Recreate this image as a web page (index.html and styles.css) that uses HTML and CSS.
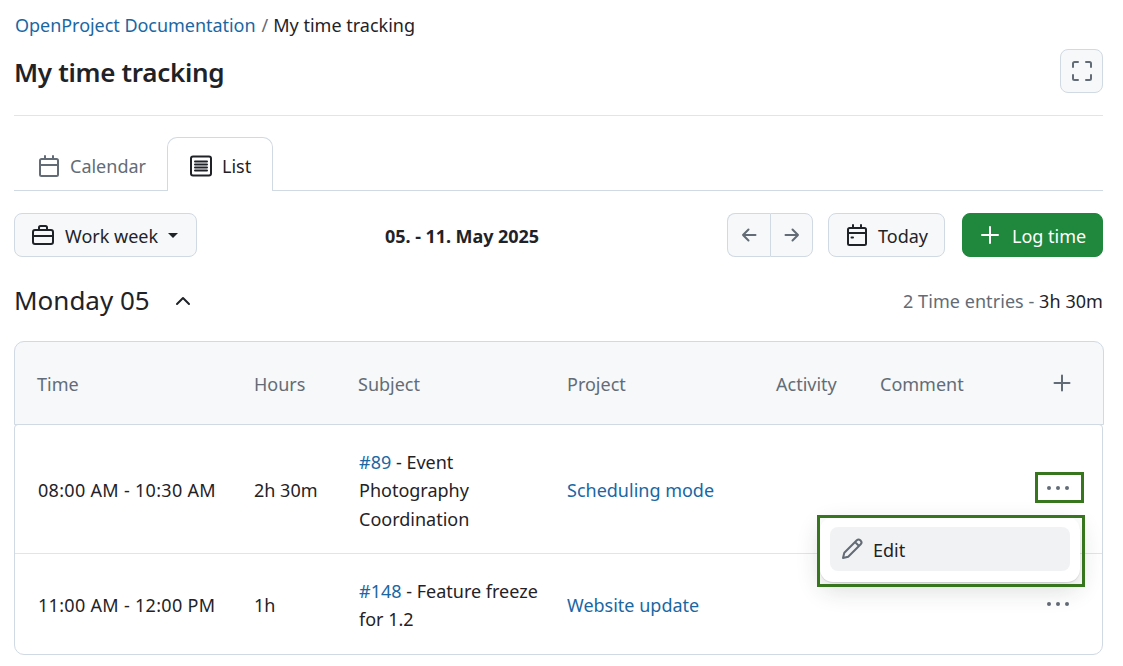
FILE: index.html
```html
<!DOCTYPE html>
<html lang="en">
<head>
<meta charset="utf-8">
<title>My time tracking</title>
<link rel="stylesheet" href="styles.css">
</head>
<body>
<main class="page">
  <nav class="crumbs"><a class="link" href="#">OpenProject Documentation</a><span class="sep">/</span><span>My time tracking</span></nav>
  <header class="title-row">
    <h1>My time tracking</h1>
    <button class="btn icon-btn" aria-label="Fullscreen">
      <svg class="ico muted" viewBox="0 0 24 24"><path d="M3 8V4.500A1.500 1.500 0 0 1 4.500 3H8M16 3h3.500A1.500 1.500 0 0 1 21 4.500V8M21 16v3.500a1.500 1.500 0 0 1-1.500 1.500H16M8 21H4.500A1.500 1.500 0 0 1 3 19.500V16"/></svg>
    </button>
  </header>
  <div class="tabs">
    <a class="tab" href="#">
      <svg class="ico muted" viewBox="0 0 24 24"><path d="M4.500 5h15A1.500 1.500 0 0 1 21 6.500v14a1.500 1.500 0 0 1-1.500 1.500h-15A1.500 1.500 0 0 1 3 20.500v-14A1.500 1.500 0 0 1 4.500 5zM3 11h18M8 2v3M16 2v3"/></svg>
      <span>Calendar</span></a>
    <a class="tab active" href="#">
      <svg class="ico" viewBox="0 0 24 24"><rect x="2" y="2.500" width="20" height="19" rx="2"/><path d="M6 7.500h12M6 10.500h12M6 13.500h12M6 16.500h12"/></svg>
      <span>List</span></a>
  </div>
  <div class="toolbar">
    <button class="btn week">
      <svg class="ico" viewBox="0 0 24 24"><rect x="2" y="7" width="20" height="14" rx="2"/><path d="M2 13h20M8 7V4.500A1.500 1.500 0 0 1 9.500 3h5A1.500 1.500 0 0 1 16 4.500V7"/></svg>
      <span class="lbl">Work week</span><span class="caret"></span>
    </button>
    <strong class="range">05. - 11. May 2025</strong>
    <div class="actions">
      <div class="group">
        <button class="btn seg" aria-label="Previous"><svg class="ico-s muted" viewBox="0 0 16 16"><path d="M14.500 8H2M7.500 2.500 2 8l5.500 5.500"/></svg></button>
        <button class="btn seg" aria-label="Next"><svg class="ico-s muted" viewBox="0 0 16 16"><path d="M1.500 8H14M8.500 2.500 14 8l-5.500 5.500"/></svg></button>
      </div>
      <button class="btn today">
        <svg class="ico" viewBox="0 0 24 24"><path d="M4.500 5h15A1.500 1.500 0 0 1 21 6.500v14a1.500 1.500 0 0 1-1.500 1.500h-15A1.500 1.500 0 0 1 3 20.500v-14A1.500 1.500 0 0 1 4.500 5zM3 10h18M8 2v3M16 2v3M6.500 14.500h1.500"/></svg>
        <span class="lbl">Today</span></button>
      <button class="btn primary">
        <svg class="ico" viewBox="0 0 24 24"><path d="M12 4v16M4 12h16"/></svg>
        <span class="lbl">Log time</span></button>
    </div>
  </div>
  <div class="day">
    <h2>Monday 05</h2>
    <svg class="chev" viewBox="0 0 16 16"><path d="M2 11 8 5l6 6"/></svg>
    <p class="summary">2 Time entries - <span class="total">3h 30m</span></p>
  </div>
  <section class="table">
    <div class="row head">
      <div>Time</div><div>Hours</div><div>Subject</div><div>Project</div><div>Activity</div><div>Comment</div>
      <svg class="ico plus muted" viewBox="0 0 24 24"><path d="M12 4.500v15M4.500 12h15"/></svg>
    </div>
    <div class="body">
      <div class="row entry first">
        <div class="time">08:00 AM - 10:30 AM</div><div>2h 30m</div>
        <div class="subject"><a class="link" href="#">#89</a> <span>- Event</span> <span>Photography</span> <span>Coordination</span></div>
        <div><a class="link" href="#">Scheduling mode</a></div><div></div><div></div>
        <span class="dots" aria-label="More"><i></i><i></i><i></i></span>
      </div>
      <div class="row entry">
        <div class="time">11:00 AM - 12:00 PM</div><div>1h</div>
        <div class="subject"><a class="link" href="#">#148</a> <span>- Feature freeze</span> <span>for 1.2</span></div>
        <div><a class="link" href="#">Website update</a></div><div></div><div></div>
        <span class="dots" aria-label="More"><i></i><i></i><i></i></span>
      </div>
    </div>
    <div class="menu">
      <div class="menu-item">
        <svg class="ico muted" viewBox="0 0 24 24"><path d="M3 21l1.300-5.200L16.800 3.300a2.500 2.500 0 0 1 3.500 0l.4.400a2.500 2.500 0 0 1 0 3.500L8.200 19.700zM15 5l4 4"/></svg>
        <span class="lbl">Edit</span></div>
    </div>
    <span class="mark mark-dots"></span>
    <span class="mark mark-menu"></span>
  </section>
</main>
</body>
</html>
```

FILE: styles.css
```css
* { box-sizing: border-box; }
html, body { margin: 0; height: 100%; overflow: hidden; }
body {
  background: #fff;
  color: #1f2328;
  font-family: "Noto Sans", sans-serif;
  font-size: 18px;
  line-height: 28px;
}
.page { padding: 11px 20px 0 14px; width: 1123px; }
.link { color: #1a67a3; text-decoration: none; }
.ico, .ico-s, .chev {
  fill: none;
  stroke: currentColor;
  stroke-width: 2;
  stroke-linecap: round;
  stroke-linejoin: round;
  flex: none;
}
.ico { width: 24px; height: 24px; }
.ico-s { width: 16px; height: 16px; }
.muted { color: #636c76; }
.lbl { padding-top: 2px; }

.crumbs { display: flex; padding-left: 1px; height: 28px; }
.crumbs .link { letter-spacing: -.04px; }
.sep { margin: 0 5px 0 6px; color: #636c76; }

.title-row {
  display: flex;
  justify-content: space-between;
  align-items: flex-start;
  height: 66px;
  margin-top: 11px;
  border-bottom: 1px solid #e1e5ea;
}
h1 { margin: 0; font-size: 26px; line-height: 44px; font-weight: 600; letter-spacing: -.3px; }
.btn {
  display: flex;
  align-items: center;
  font: inherit;
  color: inherit;
  background: #f6f8fa;
  border: 1px solid #d1d9e3;
  border-radius: 8px;
  height: 44px;
  padding: 0;
}
.icon-btn { width: 43px; justify-content: center; margin-top: -1px; }

.tabs {
  display: flex;
  height: 54px;
  margin-top: 21px;
  padding-left: 1px;
  border-bottom: 1px solid #d1d9e3;
}
.tab {
  display: flex;
  align-items: center;
  gap: 9px;
  height: 54px;
  color: #636c76;
  text-decoration: none;
  padding: 2px 21px 0;
  border: 1px solid transparent;
  border-bottom: 0;
  border-radius: 10px 10px 0 0;
}
.tab:first-child { padding-right: 20px; }
.tab.active { color: #1f2328; background: #fff; border-color: #d1d9e3; }

.toolbar { display: flex; align-items: center; margin-top: 22px; height: 44px; }
.week { width: 183px; padding-left: 16px; gap: 10px; }
.caret {
  border: 5.500px solid transparent;
  border-top-color: #1f2328;
  border-bottom: 0;
}
.range { margin-left: 188px; padding-top: 2px; font-weight: 700; letter-spacing: -.05px; }
.actions { display: flex; margin-left: auto; }
.group { display: flex; margin-right: 15px; }
.seg { width: 43px; justify-content: center; border-radius: 0 8px 8px 0; }
.seg:first-child { border-radius: 8px 0 0 8px; border-right: 0; }
.today { width: 117px; padding-left: 16px; gap: 9px; margin-right: 17px; }
.primary {
  width: 141px;
  padding-left: 15px;
  gap: 10px;
  background: #1f883d;
  border-color: #1f883d;
  color: #fff;
}

.day { display: flex; align-items: center; height: 44px; margin-top: 22px; }
h2 { margin: 0; padding-bottom: 2px; font-size: 26px; line-height: 42px; font-weight: 400; }
.chev { width: 16px; height: 16px; margin-left: 25px; }
.summary { margin: 0 0 0 auto; color: #636c76; letter-spacing: .06px; }
.total { color: #1f2328; }

.table { position: relative; margin-top: 18px; }
.row {
  display: grid;
  grid-template-columns: 217px 104px 209px 209px 104px 1fr;
  align-items: center;
  position: relative;
}
.head {
  height: 84px;
  margin-right: -1px;
  padding: 2px 0 0 22px;
  color: #636c76;
  background: #f6f8fa;
  border: 1px solid #d1d9e3;
  border-radius: 10px 10px 0 0;
}
.plus { position: absolute; right: 29px; top: 29px; }
.body {
  height: 231px;
  margin-top: -1px;
  position: relative;
  background: #fff;
  border: 1px solid #d1d9e3;
  border-radius: 4px 4px 10px 10px;
}
.entry { height: 100px; padding: 2px 0 0 22px; }
.entry.first { height: 129px; border-bottom: 1px solid #e1e5ea; }
.time { padding-left: 1px; letter-spacing: .3px; }
.subject { padding: 0 16px 0 1px; line-height: 28.500px; }
.first .subject { padding-top: 1px; }
.dots {
  position: absolute;
  right: 33px;
  top: 50%;
  display: flex;
  gap: 5px;
  margin-top: -2px;
}
.first .dots { margin-top: -3px; }
.dots i { width: 4px; height: 4px; border-radius: 50%; background: #636c76; }

.menu {
  position: absolute;
  left: 806px;
  top: 176px;
  width: 260px;
  height: 65px;
  padding: 10px;
  background: #fff;
  border-radius: 13px;
  box-shadow: 0 1px 1px rgba(31, 35, 40, .12), 0 8px 24px rgba(31, 35, 40, .16);
}
.menu-item {
  display: flex;
  align-items: center;
  gap: 9px;
  height: 44px;
  padding-left: 10px;
  background: #f1f2f4;
  border-radius: 8px;
}
.mark { position: absolute; border: 3px solid #38761d; }
.mark-dots { left: 1021px; top: 131px; width: 49px; height: 31px; }
.mark-menu { left: 803px; top: 174px; width: 268px; height: 72px; }
```
